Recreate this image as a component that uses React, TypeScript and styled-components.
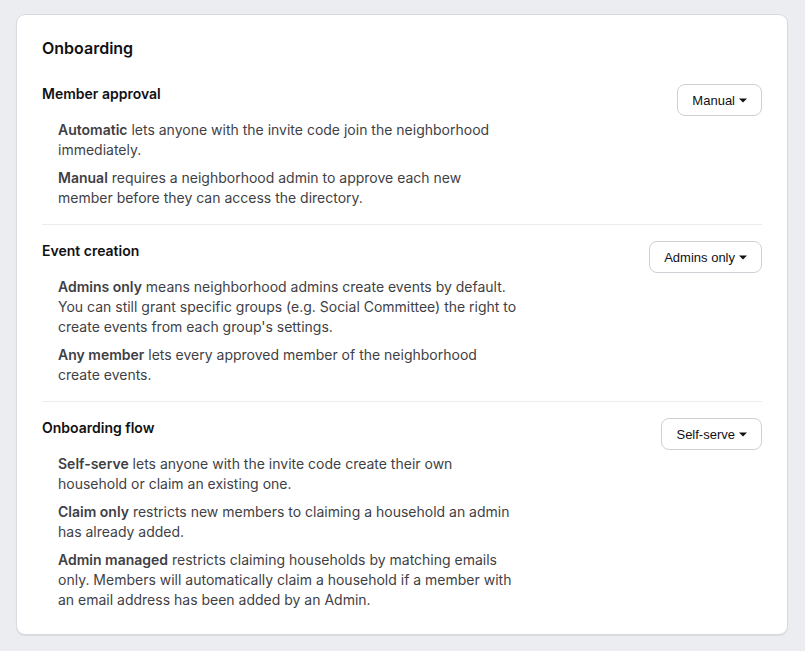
import React from 'react';
import styled, { createGlobalStyle } from 'styled-components';

const GlobalStyle = createGlobalStyle`
  html, body {
    margin: 0;
    padding: 0;
    background: #ecedf1;
    font-family: Inter, 'Liberation Sans', sans-serif;
    -webkit-font-smoothing: antialiased;
  }
`;

const Page = styled.div`
  padding: 14px 17px 16px 16px;
`;

const Card = styled.section`
  background: #ffffff;
  border: 1px solid #d9dadf;
  border-radius: 9px;
  box-shadow: 0 1px 1px rgba(0, 0, 0, 0.08);
  padding: 21px 25px 24px;
`;

const Title = styled.h2`
  margin: 0 0 24px;
  font-size: 16px;
  line-height: 24px;
  font-weight: 600;
  color: #111114;
`;

const Section = styled.div<{ $last?: boolean }>`
  display: flex;
  justify-content: space-between;
  align-items: flex-start;
  padding-bottom: ${(p) => (p.$last ? '0' : '16px')};
  margin-bottom: ${(p) => (p.$last ? '0' : '16px')};
  border-bottom: ${(p) => (p.$last ? 'none' : '1px solid #ececef')};
`;

const Info = styled.div`
  display: flex;
  flex-direction: column;
`;

const Heading = styled.h3`
  margin: 0;
  font-size: 14px;
  line-height: 20px;
  font-weight: 600;
  color: #111114;
`;

const Descriptions = styled.div`
  display: flex;
  flex-direction: column;
  gap: 8px;
  margin-top: 16px;
  padding-left: 16px;
  max-width: 460px;
`;

const Desc = styled.p`
  margin: 0;
  font-size: 14px;
  line-height: 20px;
  color: #3f3f46;

  & strong {
    font-weight: 600;
    color: #3f3f46;
  }
`;

const Select = styled.button`
  display: inline-flex;
  align-items: center;
  gap: 4px;
  height: 32px;
  padding: 0 14px;
  background: #ffffff;
  border: 1px solid #cfd0d5;
  border-radius: 8px;
  font-family: 'Liberation Sans', Arial, sans-serif;
  font-size: 13px;
  color: #111114;
  cursor: pointer;
  flex-shrink: 0;
`;

const Caret = () => (
  <svg width="8" height="5" viewBox="0 0 8 5" aria-hidden>
    <path d="M0 0.5h8L4 4.5z" fill="#111114" />
  </svg>
);

type Option = { label: string; text: string };

const sections: { title: string; value: string; options: Option[] }[] = [
  {
    title: 'Member approval',
    value: 'Manual',
    options: [
      { label: 'Automatic', text: 'lets anyone with the invite code join the neighborhood immediately.' },
      { label: 'Manual', text: 'requires a neighborhood admin to approve each new member before they can access the directory.' },
    ],
  },
  {
    title: 'Event creation',
    value: 'Admins only',
    options: [
      {
        label: 'Admins only',
        text: "means neighborhood admins create events by default. You can still grant specific groups (e.g. Social Committee) the right to create events from each group's settings.",
      },
      { label: 'Any member', text: 'lets every approved member of the neighborhood create events.' },
    ],
  },
  {
    title: 'Onboarding flow',
    value: 'Self-serve',
    options: [
      { label: 'Self-serve', text: 'lets anyone with the invite code create their own household or claim an existing one.' },
      { label: 'Claim only', text: 'restricts new members to claiming a household an admin has already added.' },
      {
        label: 'Admin managed',
        text: 'restricts claiming households by matching emails only. Members will automatically claim a household if a member with an email address has been added by an Admin.',
      },
    ],
  },
];

export default function App() {
  return (
    <Page>
      <GlobalStyle />
      <Card>
        <Title>Onboarding</Title>
        {sections.map((s, i) => (
          <Section key={s.title} $last={i === sections.length - 1}>
            <Info>
              <Heading>{s.title}</Heading>
              <Descriptions>
                {s.options.map((o) => (
                  <Desc key={o.label}>
                    <strong>{o.label}</strong> {o.text}
                  </Desc>
                ))}
              </Descriptions>
            </Info>
            <Select>
              {s.value}
              <Caret />
            </Select>
          </Section>
        ))}
      </Card>
    </Page>
  );
}
